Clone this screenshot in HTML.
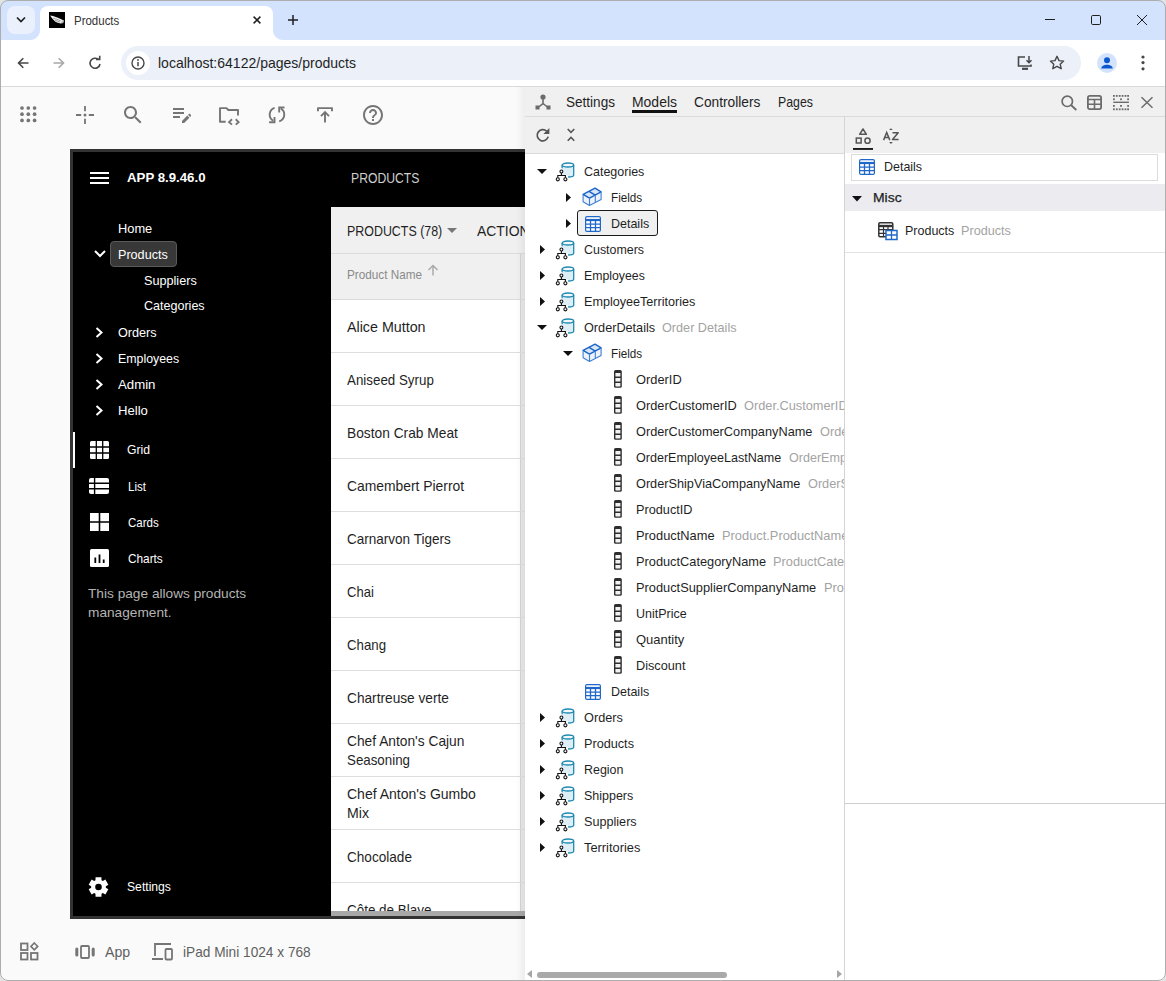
<!DOCTYPE html>
<html><head><meta charset="utf-8">
<style>
*{box-sizing:border-box;margin:0;padding:0}
html,body{width:1166px;height:981px;overflow:hidden;background:#fafafa;font-family:"Liberation Sans",sans-serif;color:#1f1f1f}
#win{position:absolute;left:0;top:0;width:1166px;height:981px;overflow:hidden;background:#fafafa}
.r{position:absolute}
svg{position:absolute;overflow:visible}
.t{position:absolute;white-space:nowrap;line-height:1;transform-origin:0 0}
.clip{position:absolute;left:0;top:0;overflow:hidden}
</style></head><body><div id="win">

<div class="r" style="left:0px;top:0px;width:1166px;height:40px;background:#d3e3fd"></div>
<div class="r" style="left:40px;top:6px;width:233px;height:34px;background:#fff;border-radius:8px 8px 0 0"></div>
<div class="r" style="left:30px;top:30px;width:10px;height:10px;background:radial-gradient(circle at 0 0,#d3e3fd 9.5px,#fff 10.5px)"></div>
<div class="r" style="left:273px;top:30px;width:10px;height:10px;background:radial-gradient(circle at 10px 0,#d3e3fd 9.5px,#fff 10.5px)"></div>
<div class="r" style="left:7px;top:6px;width:28px;height:28px;background:#eaf1fd;border-radius:8px"></div>
<svg style="left:15px;top:16px" width="12" height="8" viewBox="0 0 12 8"><path d="M2 1.5l4 4 4-4" fill="none" stroke="#1f1f1f" stroke-width="1.7"/></svg>
<div class="r" style="left:49px;top:12px;width:16px;height:16px;background:#000"></div>
<svg style="left:49px;top:12px" width="16" height="16" viewBox="0 0 16 16"><path d="M1.1 3.4C4.5 3.8 10 5.6 15.2 8.7L14.2 10.8C12.5 11.8 10 11.5 8 10.6 5.5 9.3 3 6.5 1.1 3.4z" fill="#f2f2f2"/><path d="M4 6.2c2.5.6 5 1.3 7.5 2.6M6 8.3c1.8.5 3.5 1.1 5 1.8" stroke="#777" stroke-width=".7" fill="none"/><path d="M13.8 8.6l.8 2.6M12.8 9.6l.6 2.4" stroke="#555" stroke-width=".6"/></svg>
<div class="t" style="left:73.80px;top:14.98px;font-size:12.30px;color:#333;transform:scaleX(0.9333)">Products</div>
<svg style="left:253px;top:16px" width="8" height="8" viewBox="0 0 8 8"><path d="M0.6 0.6l6.8 6.8M7.4 0.6l-6.8 6.8" stroke="#1f1f1f" stroke-width="1.5"/></svg>
<svg style="left:288px;top:15px" width="10" height="10" viewBox="0 0 10 10"><path d="M5 0v10M0 5h10" stroke="#1f1f1f" stroke-width="1.5"/></svg>
<svg style="left:1045px;top:19px" width="10" height="1" viewBox="0 0 10 1"><path d="M0 .5h10" stroke="#1f1f1f" stroke-width="1"/></svg>
<svg style="left:1091px;top:15px" width="10" height="10" viewBox="0 0 10 10"><rect x=".5" y=".5" width="9" height="9" rx="1.2" fill="none" stroke="#1f1f1f" stroke-width="1"/></svg>
<svg style="left:1137px;top:15px" width="10" height="10" viewBox="0 0 10 10"><path d="M0 0l10 10M10 0L0 10" stroke="#1f1f1f" stroke-width="1"/></svg>
<div class="r" style="left:0px;top:40px;width:1166px;height:46px;background:#fff"></div>
<div class="r" style="left:0px;top:86px;width:1166px;height:1px;background:#d9d9d9"></div>
<svg style="left:17px;top:57px" width="12" height="12" viewBox="0 0 12 12"><path d="M11.5 6H1.8M6.3 1.2L1.5 6l4.8 4.8" fill="none" stroke="#474747" stroke-width="1.6"/></svg>
<svg style="left:53px;top:57px" width="12" height="12" viewBox="0 0 12 12"><path d="M.5 6h9.7M5.7 1.2L10.5 6l-4.8 4.8" fill="none" stroke="#a8a8a8" stroke-width="1.6"/></svg>
<svg style="left:89px;top:57px" width="12" height="12" viewBox="0 0 12 12"><path d="M11 7A5 5 0 1 1 9.3 2.4" fill="none" stroke="#474747" stroke-width="1.6"/><path d="M7 2.4h3.7V-1.2" fill="none" stroke="#474747" stroke-width="1.6"/></svg>
<div class="r" style="left:121px;top:46px;width:960px;height:34px;background:#ebf0f9;border-radius:17px"></div>
<div class="r" style="left:126px;top:51px;width:24px;height:24px;background:#fff;border-radius:12px"></div>
<svg style="left:131px;top:56px" width="14" height="14" viewBox="0 0 14 14"><circle cx="7" cy="7" r="6" fill="none" stroke="#474747" stroke-width="1.4"/><path d="M7 6v4.2" stroke="#474747" stroke-width="1.5"/><circle cx="7" cy="4" r=".9" fill="#474747"/></svg>
<div class="t" style="left:158.40px;top:56.27px;font-size:14.20px;color:#1f1f1f;transform:scaleX(0.9884)">localhost:64122/pages/products</div>
<svg style="left:1017px;top:56px" width="17" height="14" viewBox="0 0 17 14"><path d="M8 1H1.5v9H14V8.5" fill="none" stroke="#474747" stroke-width="1.6"/><path d="M12 0v6.5M9.5 4.2L12 6.7l2.5-2.5" fill="none" stroke="#474747" stroke-width="1.5"/><path d="M5 12.8h6" stroke="#474747" stroke-width="2.2"/></svg>
<svg style="left:1049px;top:55px" width="16" height="15" viewBox="0 0 16 15"><path d="M8 1.3l2 4.3 4.6.5-3.4 3.1 1 4.5L8 11.4 3.8 13.7l1-4.5L1.4 6.1 6 5.6z" fill="none" stroke="#474747" stroke-width="1.4" stroke-linejoin="round"/></svg>
<div class="r" style="left:1097px;top:53px;width:20px;height:20px;background:#d3e3fd;border-radius:10px"></div>
<svg style="left:1097px;top:53px" width="20" height="20" viewBox="0 0 20 20"><circle cx="10" cy="7.3" r="3" fill="#0b57d0"/><path d="M4.3 15.5c0-2.6 2.9-3.8 5.7-3.8s5.7 1.2 5.7 3.8z" fill="#0b57d0"/></svg>
<svg style="left:1141px;top:55px" width="4" height="16" viewBox="0 0 4 16"><circle cx="2" cy="2" r="1.6" fill="#474747"/><circle cx="2" cy="7.6" r="1.6" fill="#474747"/><circle cx="2" cy="13.8" r="1.6" fill="#474747"/></svg>
<svg style="left:20px;top:106px" width="17" height="17" viewBox="0 0 17 17"><circle cx="2.0" cy="2.0" r="1.85" fill="#757575"/><circle cx="2.0" cy="8.2" r="1.85" fill="#757575"/><circle cx="2.0" cy="14.4" r="1.85" fill="#757575"/><circle cx="8.3" cy="2.0" r="1.85" fill="#757575"/><circle cx="8.3" cy="8.2" r="1.85" fill="#757575"/><circle cx="8.3" cy="14.4" r="1.85" fill="#757575"/><circle cx="14.6" cy="2.0" r="1.85" fill="#757575"/><circle cx="14.6" cy="8.2" r="1.85" fill="#757575"/><circle cx="14.6" cy="14.4" r="1.85" fill="#757575"/></svg>
<svg style="left:76px;top:106px" width="18" height="18" viewBox="0 0 18 18"><path d="M9 0v5.2M9 12.8V18M0 9h5.2M12.8 9H18" stroke="#757575" stroke-width="1.8"/><circle cx="9" cy="9" r="1.5" fill="#757575"/></svg>
<svg style="left:121px;top:103px" width="24" height="24" viewBox="0 0 24 24"><path fill="#757575" d="M15.5 14h-.79l-.28-.27C15.41 12.59 16 11.11 16 9.5 16 5.91 13.09 3 9.5 3S3 5.91 3 9.5 5.91 16 9.5 16c1.61 0 3.09-.59 4.23-1.57l.27.28v.79l5 4.99L20.49 19l-4.99-5zm-6 0C7.01 14 5 11.99 5 9.5S7.01 5 9.5 5 14 7.01 14 9.5 11.99 14 9.5 14z"/></svg>
<svg style="left:170px;top:101.5px" width="24" height="24" viewBox="0 0 24 24"><path fill="#757575" d="M3 10h11v2H3v-2zm0-2h11V6H3v2zm0 8h7v-2H3v2zm15.01-3.13.71-.71c.39-.39 1.02-.39 1.41 0l.71.71c.39.39.39 1.02 0 1.41l-.71.71-2.12-2.12zm-.71.71-5.3 5.3V21h2.12l5.3-5.3-2.12-2.12z"/></svg>
<svg style="left:218px;top:106px" width="24" height="20" viewBox="0 0 24 20"><path d="M7.7 15.7H2V2.1h6.5l1.8 1.9H20v5.5" fill="none" stroke="#757575" stroke-width="1.9" stroke-linejoin="round"/><path d="M14 13.3l-2.9 2.8 2.9 2.5M17.7 13.3l2.9 2.8-2.9 2.5" fill="none" stroke="#757575" stroke-width="1.9"/></svg>
<svg style="left:268px;top:106px" width="18" height="18" viewBox="0 0 18 18"><path d="M6.6 1.9A7.1 7.1 0 0 0 5.2 14.8" fill="none" stroke="#757575" stroke-width="1.9"/><path d="M1.1 16.3H6.5V10.9" fill="none" stroke="#757575" stroke-width="1.9"/><path d="M11.2 15.4A7.1 7.1 0 0 0 12.8 2.5" fill="none" stroke="#757575" stroke-width="1.9"/><path d="M11.2 6.5V1.5H16.5" fill="none" stroke="#757575" stroke-width="1.9"/></svg>
<svg style="left:317px;top:106px" width="16" height="18" viewBox="0 0 16 18"><path d="M1 5.3V2.1h14v3.2" fill="none" stroke="#757575" stroke-width="1.9" stroke-linejoin="round"/><path d="M8 16.5V6.3M4 10.1l4-4 4 4" fill="none" stroke="#757575" stroke-width="1.9"/></svg>
<svg style="left:361px;top:103px" width="24" height="24" viewBox="0 0 24 24"><path fill="#757575" d="M11 18h2v-2h-2v2zm1-16C6.48 2 2 6.48 2 12s4.48 10 10 10 10-4.48 10-10S17.52 2 12 2zm0 18c-4.41 0-8-3.59-8-8s3.59-8 8-8 8 3.59 8 8-3.59 8-8 8zm0-14c-2.21 0-4 1.79-4 4h2c0-1.1.9-2 2-2s2 .9 2 2c0 2-3 1.75-3 5h2c0-2.25 3-2.5 3-5 0-2.21-1.79-4-4-4z"/></svg>
<div class="clip" style="width:525px;height:981px">
<div class="r" style="left:70px;top:149px;width:470px;height:770px;background:#333"></div>
<div class="r" style="left:73px;top:152px;width:470px;height:764px;background:#000"></div>
<div class="r" style="left:89.5px;top:172px;width:19px;height:2px;background:#fff"></div>
<div class="r" style="left:89.5px;top:177px;width:19px;height:2px;background:#fff"></div>
<div class="r" style="left:89.5px;top:182px;width:19px;height:2px;background:#fff"></div>
<div class="t" style="left:127.30px;top:171.32px;font-size:13.20px;color:#fff;font-weight:700;transform:scaleX(1.0041)">APP 8.9.46.0</div>
<div class="t" style="left:350.50px;top:170.87px;font-size:14.20px;color:#cfcfcf;transform:scaleX(0.8597)">PRODUCTS</div>
<div class="t" style="left:118.30px;top:221.72px;font-size:13.20px;color:#fff;transform:scaleX(0.9741)">Home</div>
<div class="r" style="left:109.5px;top:241px;width:67px;height:26px;background:#383838;border:1px solid #5a5a5a;border-radius:4px"></div>
<svg style="left:94px;top:250px" width="12" height="8" viewBox="0 0 12 8"><path d="M1 1l5 5 5-5" fill="none" stroke="#fff" stroke-width="2"/></svg>
<div class="t" style="left:118.30px;top:247.82px;font-size:13.20px;color:#fff;transform:scaleX(0.9560)">Products</div>
<div class="t" style="left:144.10px;top:273.62px;font-size:13.20px;color:#fff;transform:scaleX(0.9595)">Suppliers</div>
<div class="t" style="left:144.10px;top:299.42px;font-size:13.20px;color:#fff;transform:scaleX(0.9509)">Categories</div>
<svg style="left:95px;top:327.3px" width="9" height="11" viewBox="0 0 9 11"><path d="M1.5 1l5 4.5-5 4.5" fill="none" stroke="#fff" stroke-width="2"/></svg>
<div class="t" style="left:118.10px;top:325.62px;font-size:13.20px;color:#fff;transform:scaleX(0.9593)">Orders</div>
<svg style="left:95px;top:353.3px" width="9" height="11" viewBox="0 0 9 11"><path d="M1.5 1l5 4.5-5 4.5" fill="none" stroke="#fff" stroke-width="2"/></svg>
<div class="t" style="left:118.10px;top:351.62px;font-size:13.20px;color:#fff;transform:scaleX(0.9372)">Employees</div>
<svg style="left:95px;top:379.3px" width="9" height="11" viewBox="0 0 9 11"><path d="M1.5 1l5 4.5-5 4.5" fill="none" stroke="#fff" stroke-width="2"/></svg>
<div class="t" style="left:118.10px;top:377.62px;font-size:13.20px;color:#fff;transform:scaleX(1.0023)">Admin</div>
<svg style="left:95px;top:405.3px" width="9" height="11" viewBox="0 0 9 11"><path d="M1.5 1l5 4.5-5 4.5" fill="none" stroke="#fff" stroke-width="2"/></svg>
<div class="t" style="left:118.10px;top:403.62px;font-size:13.20px;color:#fff;transform:scaleX(0.9940)">Hello</div>
<div class="r" style="left:73px;top:432px;width:2px;height:36px;background:#fff"></div>
<svg style="left:89.5px;top:441px" width="19" height="18" viewBox="0 0 19 18"><rect x="0" y="0" width="19" height="18" rx="1.5" fill="#fff"/><path d="M6.3 0v18M12.7 0v18M0 6h19M0 12h19" stroke="#000" stroke-width="1.3"/></svg>
<div class="t" style="left:127.10px;top:443.42px;font-size:13.20px;color:#fff;transform:scaleX(0.9263)">Grid</div>
<svg style="left:89px;top:478px" width="20" height="16" viewBox="0 0 20 16"><rect x="0" y="0" width="20" height="16" rx="2" fill="#fff"/><path d="M5.6 0v16M0 5.3h20M0 10.7h20" stroke="#000" stroke-width="1.4"/></svg>
<div class="t" style="left:127.50px;top:479.72px;font-size:13.20px;color:#fff;transform:scaleX(0.8763)">List</div>
<svg style="left:89.7px;top:513px" width="19" height="18" viewBox="0 0 19 18"><rect x="0" y="0" width="19" height="18" fill="#fff"/><path d="M9.5 0v18M0 9h19" stroke="#000" stroke-width="1.6"/></svg>
<div class="t" style="left:127.50px;top:515.72px;font-size:13.20px;color:#fff;transform:scaleX(0.8719)">Cards</div>
<svg style="left:89.7px;top:549px" width="19" height="18" viewBox="0 0 19 18"><rect x="0" y="0" width="19" height="18" rx="1.5" fill="#fff"/><path d="M5.3 8.5v5.5M9.5 5.5v8.5M13.7 10.5v3.5" stroke="#000" stroke-width="1.8"/></svg>
<div class="t" style="left:127.50px;top:551.72px;font-size:13.20px;color:#fff;transform:scaleX(0.8951)">Charts</div>
<div class="t" style="left:88.00px;top:587.22px;font-size:13.20px;color:#b4b4b4;transform:scaleX(1.0373)">This page allows products</div>
<div class="t" style="left:88.00px;top:606.02px;font-size:13.20px;color:#b4b4b4;transform:scaleX(1.0370)">management.</div>
<svg style="left:88.1px;top:877px" width="21" height="20" viewBox="0 0 21 20"><path fill="#fff" fill-rule="evenodd" d="M13.45 0.34 L7.55 0.34 L7.49 3.24 L6.15 4.01 L3.61 2.61 L0.66 7.73 L3.14 9.23 L3.14 10.77 L0.66 12.27 L3.61 17.39 L6.15 15.99 L7.49 16.76 L7.55 19.66 L13.45 19.66 L13.51 16.76 L14.85 15.99 L17.39 17.39 L20.34 12.27 L17.86 10.77 L17.86 9.23 L20.34 7.73 L17.39 2.61 L14.85 4.01 L13.51 3.24z M13.80 10.00 A3.3 3.3 0 1 0 7.20 10.00 A3.3 3.3 0 1 0 13.80 10.00z"/></svg>
<div class="t" style="left:127.30px;top:880.22px;font-size:13.20px;color:#fff;transform:scaleX(0.9225)">Settings</div>
<div class="r" style="left:331px;top:207px;width:200px;height:709px;background:#fff"></div>
<div class="r" style="left:331px;top:207px;width:200px;height:92px;background:#f0f0f0"></div>
<div class="r" style="left:521px;top:253px;width:4px;height:658px;background:#e9e9e9"></div>
<div class="r" style="left:520px;top:253px;width:1px;height:658px;background:#d4d4d4"></div>
<div class="r" style="left:331px;top:253px;width:200px;height:1px;background:#dcdcdc"></div>
<div class="r" style="left:331px;top:299px;width:200px;height:1px;background:#dcdcdc"></div>
<div class="t" style="left:346.90px;top:223.97px;font-size:14.20px;color:#1f1f1f;transform:scaleX(0.8753)">PRODUCTS (78)</div>
<svg style="left:447px;top:228px" width="10" height="5" viewBox="0 0 10 5"><path d="M0 0h10L5 5z" fill="#777"/></svg>
<div class="t" style="left:477.00px;top:223.97px;font-size:14.20px;color:#1f1f1f;transform:scaleX(0.9823)">ACTIONS</div>
<div class="t" style="left:346.90px;top:267.52px;font-size:13.20px;color:#8a8a8a;transform:scaleX(0.8901)">Product Name</div>
<svg style="left:427px;top:264px" width="12" height="12" viewBox="0 0 12 12"><path d="M6 11.5V1.5M1.5 6L6 1.5 10.5 6" fill="none" stroke="#aaa" stroke-width="1.5"/></svg>
<div class="t" style="left:346.90px;top:319.77px;font-size:14.20px;color:#1f1f1f;transform:scaleX(1.0060)">Alice Mutton</div>
<div class="r" style="left:331px;top:352px;width:194px;height:1px;background:#dedede"></div>
<div class="t" style="left:346.90px;top:372.77px;font-size:14.20px;color:#1f1f1f;transform:scaleX(0.9409)">Aniseed Syrup</div>
<div class="r" style="left:331px;top:405px;width:194px;height:1px;background:#dedede"></div>
<div class="t" style="left:346.90px;top:425.77px;font-size:14.20px;color:#1f1f1f;transform:scaleX(0.9699)">Boston Crab Meat</div>
<div class="r" style="left:331px;top:458px;width:194px;height:1px;background:#dedede"></div>
<div class="t" style="left:346.90px;top:478.77px;font-size:14.20px;color:#1f1f1f;transform:scaleX(0.9771)">Camembert Pierrot</div>
<div class="r" style="left:331px;top:511px;width:194px;height:1px;background:#dedede"></div>
<div class="t" style="left:346.90px;top:531.77px;font-size:14.20px;color:#1f1f1f;transform:scaleX(0.9530)">Carnarvon Tigers</div>
<div class="r" style="left:331px;top:564px;width:194px;height:1px;background:#dedede"></div>
<div class="t" style="left:346.90px;top:584.77px;font-size:14.20px;color:#1f1f1f;transform:scaleX(0.9177)">Chai</div>
<div class="r" style="left:331px;top:617px;width:194px;height:1px;background:#dedede"></div>
<div class="t" style="left:346.90px;top:637.77px;font-size:14.20px;color:#1f1f1f;transform:scaleX(0.9344)">Chang</div>
<div class="r" style="left:331px;top:670px;width:194px;height:1px;background:#dedede"></div>
<div class="t" style="left:346.90px;top:690.77px;font-size:14.20px;color:#1f1f1f;transform:scaleX(0.9645)">Chartreuse verte</div>
<div class="r" style="left:331px;top:723px;width:194px;height:1px;background:#dedede"></div>
<div class="r" style="left:331px;top:776px;width:194px;height:1px;background:#dedede"></div>
<div class="r" style="left:331px;top:829px;width:194px;height:1px;background:#dedede"></div>
<div class="t" style="left:346.90px;top:849.77px;font-size:14.20px;color:#1f1f1f;transform:scaleX(0.9574)">Chocolade</div>
<div class="r" style="left:331px;top:882px;width:194px;height:1px;background:#dedede"></div>
<div class="t" style="left:346.90px;top:902.77px;font-size:14.20px;color:#1f1f1f;transform:scaleX(0.9473)">Côte de Blaye</div>
<div class="t" style="left:346.90px;top:733.77px;font-size:14.20px;color:#1f1f1f;transform:scaleX(0.9701)">Chef Anton&#x27;s Cajun</div>
<div class="t" style="left:346.90px;top:752.97px;font-size:14.20px;color:#1f1f1f;transform:scaleX(0.9387)">Seasoning</div>
<div class="t" style="left:346.90px;top:786.77px;font-size:14.20px;color:#1f1f1f;transform:scaleX(0.9878)">Chef Anton&#x27;s Gumbo</div>
<div class="t" style="left:346.90px;top:805.97px;font-size:14.20px;color:#1f1f1f;transform:scaleX(0.9962)">Mix</div>
<div class="r" style="left:331px;top:911px;width:200px;height:5px;background:#a8a8a8"></div>
<div class="r" style="left:70px;top:916px;width:470px;height:3px;background:#333"></div>
</div>
<svg style="left:20px;top:942px" width="19" height="19" viewBox="0 0 19 19"><rect x="1" y="1.5" width="6.5" height="6.5" fill="none" stroke="#757575" stroke-width="1.8"/><rect x="1" y="11" width="6.5" height="6.5" fill="none" stroke="#757575" stroke-width="1.8"/><rect x="11" y="11" width="6.5" height="6.5" fill="none" stroke="#757575" stroke-width="1.8"/><path d="M14.3 1l3.4 3.4-3.4 3.4-3.4-3.4z" fill="none" stroke="#757575" stroke-width="1.6"/></svg>
<svg style="left:75px;top:945px" width="20" height="14" viewBox="0 0 20 14"><rect x="6" y="1" width="8" height="12" rx="1" fill="none" stroke="#757575" stroke-width="1.8"/><rect x="0.3" y="2.5" width="3" height="9" rx="1.5" fill="#757575"/><rect x="16.7" y="2.5" width="3" height="9" rx="1.5" fill="#757575"/></svg>
<div class="t" style="left:105.30px;top:944.67px;font-size:14.20px;color:#5f5f5f;transform:scaleX(0.9974)">App</div>
<svg style="left:152px;top:943px" width="21" height="18" viewBox="0 0 21 18"><path d="M3 13V1h16" fill="none" stroke="#757575" stroke-width="1.8"/><path d="M0 16h11" stroke="#757575" stroke-width="2"/><rect x="13.5" y="6" width="6.5" height="10.5" rx="1" fill="none" stroke="#757575" stroke-width="1.8"/></svg>
<div class="t" style="left:182.70px;top:944.67px;font-size:14.20px;color:#5f5f5f;transform:scaleX(0.9637)">iPad Mini 1024 x 768</div>
<div class="r" style="left:516px;top:87px;width:9px;height:894px;background:linear-gradient(to right,rgba(0,0,0,0),rgba(0,0,0,.05))"></div>
<div class="r" style="left:525px;top:87px;width:641px;height:894px;background:#fff"></div>
<div class="r" style="left:525px;top:87px;width:641px;height:29px;background:#f0f0f0"></div>
<div class="r" style="left:525px;top:116px;width:641px;height:1px;background:#dadada"></div>
<div class="r" style="left:525px;top:117px;width:641px;height:36px;background:#f0f0f0"></div>
<div class="r" style="left:525px;top:153px;width:320px;height:1px;background:#dadada"></div>
<div class="r" style="left:844px;top:117px;width:1px;height:864px;background:#d4d4d4"></div>
<svg style="left:535px;top:94px" width="16" height="16" viewBox="0 0 16 16"><circle cx="8" cy="3" r="2.6" fill="#6b6b6b"/><path d="M8 5v4.5L3 13.5M8 9.5l5 4" fill="none" stroke="#6b6b6b" stroke-width="1.6"/><rect x="0.5" y="11.5" width="4" height="4" fill="#6b6b6b"/><rect x="11.5" y="11.5" width="4" height="4" fill="#6b6b6b"/></svg>
<div class="t" style="left:566.30px;top:94.97px;font-size:14.20px;color:#1f1f1f;transform:scaleX(0.9550)">Settings</div>
<div class="t" style="left:632.40px;top:94.97px;font-size:14.20px;color:#1f1f1f;transform:scaleX(0.9830)">Models</div>
<div class="r" style="left:632px;top:110px;width:45px;height:2.5px;background:#111"></div>
<div class="t" style="left:693.90px;top:94.97px;font-size:14.20px;color:#1f1f1f;transform:scaleX(0.9686)">Controllers</div>
<div class="t" style="left:777.50px;top:94.97px;font-size:14.20px;color:#1f1f1f;transform:scaleX(0.8693)">Pages</div>
<svg style="left:1061px;top:94.5px" width="16" height="15" viewBox="0 0 16 15"><circle cx="6.3" cy="6.3" r="5.2" fill="none" stroke="#6b6b6b" stroke-width="1.7"/><path d="M10 10l5.3 5" stroke="#6b6b6b" stroke-width="1.8"/></svg>
<svg style="left:1087px;top:94.5px" width="15" height="15" viewBox="0 0 15 15"><rect x=".9" y=".9" width="13.2" height="13.2" rx="1.8" fill="none" stroke="#6b6b6b" stroke-width="1.8"/><path d="M.9 4.5h13.2M.9 9.3h13.2M7.5 4.5v9.6" stroke="#6b6b6b" stroke-width="1.6"/></svg>
<svg style="left:1113px;top:94.5px" width="16" height="16" viewBox="0 0 16 16"><rect x="0.0" y="0.0" width="1.8" height="1.8" fill="#6b6b6b"/><rect x="2.9" y="0.0" width="1.8" height="1.8" fill="#6b6b6b"/><rect x="5.8" y="0.0" width="1.8" height="1.8" fill="#6b6b6b"/><rect x="8.7" y="0.0" width="1.8" height="1.8" fill="#6b6b6b"/><rect x="11.6" y="0.0" width="1.8" height="1.8" fill="#6b6b6b"/><rect x="14.2" y="0.0" width="1.8" height="1.8" fill="#6b6b6b"/><rect x="0.0" y="13.4" width="1.8" height="1.8" fill="#6b6b6b"/><rect x="2.9" y="13.4" width="1.8" height="1.8" fill="#6b6b6b"/><rect x="5.8" y="13.4" width="1.8" height="1.8" fill="#6b6b6b"/><rect x="8.7" y="13.4" width="1.8" height="1.8" fill="#6b6b6b"/><rect x="11.6" y="13.4" width="1.8" height="1.8" fill="#6b6b6b"/><rect x="14.2" y="13.4" width="1.8" height="1.8" fill="#6b6b6b"/><rect x="0.0" y="3.4" width="1.8" height="1.8" fill="#6b6b6b"/><rect x="7.1" y="3.4" width="1.8" height="1.8" fill="#6b6b6b"/><rect x="14.2" y="3.4" width="1.8" height="1.8" fill="#6b6b6b"/><rect x="0.0" y="10.0" width="1.8" height="1.8" fill="#6b6b6b"/><rect x="7.1" y="10.0" width="1.8" height="1.8" fill="#6b6b6b"/><rect x="14.2" y="10.0" width="1.8" height="1.8" fill="#6b6b6b"/><path d="M0.3 7.3h15.6" stroke="#6b6b6b" stroke-width="1.4"/></svg>
<svg style="left:1141px;top:96.5px" width="12" height="11" viewBox="0 0 12 11"><path d="M.5 .3l11 10.4M11.5 .3L.5 10.7" stroke="#6b6b6b" stroke-width="1.5"/></svg>
<svg style="left:536px;top:128px" width="14" height="14" viewBox="0 0 14 14"><path d="M12.2 8.6A5.6 5.6 0 1 1 10.6 3.2" fill="none" stroke="#555" stroke-width="1.7"/><path d="M13.4 0v6H7.4z" fill="#555"/></svg>
<svg style="left:567px;top:128px" width="8" height="14" viewBox="0 0 8 14"><path d="M.7 1l3.3 3.3L7.3 1M.7 12.7L4 9.4l3.3 3.3" fill="none" stroke="#555" stroke-width="1.6"/></svg>
<div class="clip" style="width:844px;height:981px">
<svg style="left:537.2px;top:169px" width="10" height="5" viewBox="0 0 10 5"><path d="M0 0h10L5 5z" fill="#111"/></svg>
<svg style="left:555px;top:162px" width="20" height="20" viewBox="0 0 20 20"><path d="M7.1 3V13.5H13v1.5c3.4 0 5.7-.8 5.7-1.8V3z" fill="#deeef6"/><path d="M7.1 3V6.2M18.7 3v10.2c0 1-2.2 1.8-5.6 1.8" fill="none" stroke="#2089b0" stroke-width="1.3"/><ellipse cx="12.9" cy="3" rx="5.8" ry="2" fill="#f2f9fc" stroke="#2089b0" stroke-width="1.3"/><circle cx="6.4" cy="9.5" r="1.45" fill="#fff" stroke="#111" stroke-width="1.1"/><path d="M6.4 11v2.5M2.8 15.7v-2.2h7.6v2.2" fill="none" stroke="#111" stroke-width="1.1"/><circle cx="2.8" cy="17.3" r="1.55" fill="#fff" stroke="#111" stroke-width="1.1"/><circle cx="10.4" cy="17.3" r="1.55" fill="#fff" stroke="#111" stroke-width="1.1"/></svg>
<div class="t" style="left:584.30px;top:164.82px;font-size:13.20px;color:#1f1f1f;transform:scaleX(0.9462)">Categories</div>
<svg style="left:566px;top:192.5px" width="5" height="9" viewBox="0 0 5 9"><path d="M0 0l5 4.5L0 9z" fill="#111"/></svg>
<svg style="left:583px;top:188.2px" width="18" height="18" viewBox="0 0 18 18"><path d="M0.1 6.4L12 0.2l6.1 3.7v7.6L6.5 17.5 0.1 13.8z" fill="#eef3fb"/><path d="M0.1 6.4L12 0.2l6.1 3.7L6.5 10.1z" fill="#d9e6f8"/><path d="M0.1 6.4L12 0.2l6.1 3.7L6.5 10.1zM6 3.3l6.3 3.8" fill="none" stroke="#1a64c8" stroke-width="1.4" stroke-linejoin="round"/><path d="M0.1 6.4v7.4l6.4 3.7 11.6-6V3.9M6.5 10.1v7.4M12.3 7.1v7.3" fill="none" stroke="#3f7fd6" stroke-width="1.1" stroke-linejoin="round"/></svg>
<div class="t" style="left:610.50px;top:190.82px;font-size:13.20px;color:#1f1f1f;transform:scaleX(0.8861)">Fields</div>
<div class="r" style="left:577.2px;top:210px;width:80.5px;height:25.5px;background:#f0f0f0;border:1px solid #1a1a1a;border-radius:3px"></div>
<svg style="left:566px;top:218.5px" width="5" height="9" viewBox="0 0 5 9"><path d="M0 0l5 4.5L0 9z" fill="#111"/></svg>
<svg style="left:584.6px;top:216px" width="16" height="16" viewBox="0 0 16 16"><rect x=".6" y=".6" width="14.8" height="14.8" rx="1.4" fill="#fff" stroke="#1f68c9" stroke-width="1.2"/><path d="M.6 4h14.8" stroke="#1f68c9" stroke-width="2.2"/><path d="M.6 8.2h14.8M.6 11.7h14.8M5.5 4v11.4M10.5 4v11.4" stroke="#1f68c9" stroke-width="1.3"/></svg>
<div class="t" style="left:610.50px;top:216.82px;font-size:13.20px;color:#1f1f1f;transform:scaleX(0.9468)">Details</div>
<svg style="left:540px;top:244.5px" width="5" height="9" viewBox="0 0 5 9"><path d="M0 0l5 4.5L0 9z" fill="#111"/></svg>
<svg style="left:555px;top:240px" width="20" height="20" viewBox="0 0 20 20"><path d="M7.1 3V13.5H13v1.5c3.4 0 5.7-.8 5.7-1.8V3z" fill="#deeef6"/><path d="M7.1 3V6.2M18.7 3v10.2c0 1-2.2 1.8-5.6 1.8" fill="none" stroke="#2089b0" stroke-width="1.3"/><ellipse cx="12.9" cy="3" rx="5.8" ry="2" fill="#f2f9fc" stroke="#2089b0" stroke-width="1.3"/><circle cx="6.4" cy="9.5" r="1.45" fill="#fff" stroke="#111" stroke-width="1.1"/><path d="M6.4 11v2.5M2.8 15.7v-2.2h7.6v2.2" fill="none" stroke="#111" stroke-width="1.1"/><circle cx="2.8" cy="17.3" r="1.55" fill="#fff" stroke="#111" stroke-width="1.1"/><circle cx="10.4" cy="17.3" r="1.55" fill="#fff" stroke="#111" stroke-width="1.1"/></svg>
<div class="t" style="left:584.30px;top:242.82px;font-size:13.20px;color:#1f1f1f;transform:scaleX(0.9418)">Customers</div>
<svg style="left:540px;top:270.5px" width="5" height="9" viewBox="0 0 5 9"><path d="M0 0l5 4.5L0 9z" fill="#111"/></svg>
<svg style="left:555px;top:266px" width="20" height="20" viewBox="0 0 20 20"><path d="M7.1 3V13.5H13v1.5c3.4 0 5.7-.8 5.7-1.8V3z" fill="#deeef6"/><path d="M7.1 3V6.2M18.7 3v10.2c0 1-2.2 1.8-5.6 1.8" fill="none" stroke="#2089b0" stroke-width="1.3"/><ellipse cx="12.9" cy="3" rx="5.8" ry="2" fill="#f2f9fc" stroke="#2089b0" stroke-width="1.3"/><circle cx="6.4" cy="9.5" r="1.45" fill="#fff" stroke="#111" stroke-width="1.1"/><path d="M6.4 11v2.5M2.8 15.7v-2.2h7.6v2.2" fill="none" stroke="#111" stroke-width="1.1"/><circle cx="2.8" cy="17.3" r="1.55" fill="#fff" stroke="#111" stroke-width="1.1"/><circle cx="10.4" cy="17.3" r="1.55" fill="#fff" stroke="#111" stroke-width="1.1"/></svg>
<div class="t" style="left:584.30px;top:268.82px;font-size:13.20px;color:#1f1f1f;transform:scaleX(0.9326)">Employees</div>
<svg style="left:540px;top:296.5px" width="5" height="9" viewBox="0 0 5 9"><path d="M0 0l5 4.5L0 9z" fill="#111"/></svg>
<svg style="left:555px;top:292px" width="20" height="20" viewBox="0 0 20 20"><path d="M7.1 3V13.5H13v1.5c3.4 0 5.7-.8 5.7-1.8V3z" fill="#deeef6"/><path d="M7.1 3V6.2M18.7 3v10.2c0 1-2.2 1.8-5.6 1.8" fill="none" stroke="#2089b0" stroke-width="1.3"/><ellipse cx="12.9" cy="3" rx="5.8" ry="2" fill="#f2f9fc" stroke="#2089b0" stroke-width="1.3"/><circle cx="6.4" cy="9.5" r="1.45" fill="#fff" stroke="#111" stroke-width="1.1"/><path d="M6.4 11v2.5M2.8 15.7v-2.2h7.6v2.2" fill="none" stroke="#111" stroke-width="1.1"/><circle cx="2.8" cy="17.3" r="1.55" fill="#fff" stroke="#111" stroke-width="1.1"/><circle cx="10.4" cy="17.3" r="1.55" fill="#fff" stroke="#111" stroke-width="1.1"/></svg>
<div class="t" style="left:584.30px;top:294.82px;font-size:13.20px;color:#1f1f1f;transform:scaleX(0.9559)">EmployeeTerritories</div>
<svg style="left:537.2px;top:325px" width="10" height="5" viewBox="0 0 10 5"><path d="M0 0h10L5 5z" fill="#111"/></svg>
<svg style="left:555px;top:318px" width="20" height="20" viewBox="0 0 20 20"><path d="M7.1 3V13.5H13v1.5c3.4 0 5.7-.8 5.7-1.8V3z" fill="#deeef6"/><path d="M7.1 3V6.2M18.7 3v10.2c0 1-2.2 1.8-5.6 1.8" fill="none" stroke="#2089b0" stroke-width="1.3"/><ellipse cx="12.9" cy="3" rx="5.8" ry="2" fill="#f2f9fc" stroke="#2089b0" stroke-width="1.3"/><circle cx="6.4" cy="9.5" r="1.45" fill="#fff" stroke="#111" stroke-width="1.1"/><path d="M6.4 11v2.5M2.8 15.7v-2.2h7.6v2.2" fill="none" stroke="#111" stroke-width="1.1"/><circle cx="2.8" cy="17.3" r="1.55" fill="#fff" stroke="#111" stroke-width="1.1"/><circle cx="10.4" cy="17.3" r="1.55" fill="#fff" stroke="#111" stroke-width="1.1"/></svg>
<div class="t" style="left:584.30px;top:320.82px;font-size:13.20px;color:#1f1f1f;transform:scaleX(0.9610)">OrderDetails</div>
<div class="t" style="left:662.30px;top:320.82px;font-size:13.20px;color:#a3a3a3;transform:scaleX(0.9594)">Order Details</div>
<svg style="left:563.2px;top:351px" width="10" height="5" viewBox="0 0 10 5"><path d="M0 0h10L5 5z" fill="#111"/></svg>
<svg style="left:583px;top:344.2px" width="18" height="18" viewBox="0 0 18 18"><path d="M0.1 6.4L12 0.2l6.1 3.7v7.6L6.5 17.5 0.1 13.8z" fill="#eef3fb"/><path d="M0.1 6.4L12 0.2l6.1 3.7L6.5 10.1z" fill="#d9e6f8"/><path d="M0.1 6.4L12 0.2l6.1 3.7L6.5 10.1zM6 3.3l6.3 3.8" fill="none" stroke="#1a64c8" stroke-width="1.4" stroke-linejoin="round"/><path d="M0.1 6.4v7.4l6.4 3.7 11.6-6V3.9M6.5 10.1v7.4M12.3 7.1v7.3" fill="none" stroke="#3f7fd6" stroke-width="1.1" stroke-linejoin="round"/></svg>
<div class="t" style="left:610.50px;top:346.82px;font-size:13.20px;color:#1f1f1f;transform:scaleX(0.8861)">Fields</div>
<svg style="left:614.1px;top:370px" width="8" height="18" viewBox="0 0 8 18"><rect x="0" y="0" width="7.8" height="17.8" rx="1.6" fill="#2e2e2e"/><rect x="1.4" y="3" width="5" height="3.6" rx=".4" fill="#f2f2f2"/><rect x="1.4" y="8.1" width="5" height="3.5" rx=".4" fill="#f2f2f2"/><rect x="1.4" y="13" width="5" height="3.5" rx=".4" fill="#f2f2f2"/></svg>
<div class="t" style="left:636.40px;top:372.82px;font-size:13.20px;color:#1f1f1f;transform:scaleX(0.9736)">OrderID</div>
<svg style="left:614.1px;top:396px" width="8" height="18" viewBox="0 0 8 18"><rect x="0" y="0" width="7.8" height="17.8" rx="1.6" fill="#2e2e2e"/><rect x="1.4" y="3" width="5" height="3.6" rx=".4" fill="#f2f2f2"/><rect x="1.4" y="8.1" width="5" height="3.5" rx=".4" fill="#f2f2f2"/><rect x="1.4" y="13" width="5" height="3.5" rx=".4" fill="#f2f2f2"/></svg>
<div class="t" style="left:636.40px;top:398.82px;font-size:13.20px;color:#1f1f1f;transform:scaleX(0.9687)">OrderCustomerID</div>
<div class="t" style="left:744.10px;top:398.82px;font-size:13.20px;color:#a3a3a3;transform:scaleX(0.9687)">Order.CustomerID</div>
<svg style="left:614.1px;top:422px" width="8" height="18" viewBox="0 0 8 18"><rect x="0" y="0" width="7.8" height="17.8" rx="1.6" fill="#2e2e2e"/><rect x="1.4" y="3" width="5" height="3.6" rx=".4" fill="#f2f2f2"/><rect x="1.4" y="8.1" width="5" height="3.5" rx=".4" fill="#f2f2f2"/><rect x="1.4" y="13" width="5" height="3.5" rx=".4" fill="#f2f2f2"/></svg>
<div class="t" style="left:636.40px;top:424.82px;font-size:13.20px;color:#1f1f1f;transform:scaleX(0.9668)">OrderCustomerCompanyName</div>
<div class="t" style="left:819.80px;top:424.82px;font-size:13.20px;color:#a3a3a3;transform:scaleX(0.9668)">Order.CustomerCompanyName</div>
<svg style="left:614.1px;top:448px" width="8" height="18" viewBox="0 0 8 18"><rect x="0" y="0" width="7.8" height="17.8" rx="1.6" fill="#2e2e2e"/><rect x="1.4" y="3" width="5" height="3.6" rx=".4" fill="#f2f2f2"/><rect x="1.4" y="8.1" width="5" height="3.5" rx=".4" fill="#f2f2f2"/><rect x="1.4" y="13" width="5" height="3.5" rx=".4" fill="#f2f2f2"/></svg>
<div class="t" style="left:636.40px;top:450.82px;font-size:13.20px;color:#1f1f1f;transform:scaleX(0.9522)">OrderEmployeeLastName</div>
<div class="t" style="left:788.50px;top:450.82px;font-size:13.20px;color:#a3a3a3;transform:scaleX(0.9522)">OrderEmployeeLastName</div>
<svg style="left:614.1px;top:474px" width="8" height="18" viewBox="0 0 8 18"><rect x="0" y="0" width="7.8" height="17.8" rx="1.6" fill="#2e2e2e"/><rect x="1.4" y="3" width="5" height="3.6" rx=".4" fill="#f2f2f2"/><rect x="1.4" y="8.1" width="5" height="3.5" rx=".4" fill="#f2f2f2"/><rect x="1.4" y="13" width="5" height="3.5" rx=".4" fill="#f2f2f2"/></svg>
<div class="t" style="left:636.40px;top:476.82px;font-size:13.20px;color:#1f1f1f;transform:scaleX(0.9636)">OrderShipViaCompanyName</div>
<div class="t" style="left:807.70px;top:476.82px;font-size:13.20px;color:#a3a3a3;transform:scaleX(0.9636)">OrderShipViaCompanyName</div>
<svg style="left:614.1px;top:500px" width="8" height="18" viewBox="0 0 8 18"><rect x="0" y="0" width="7.8" height="17.8" rx="1.6" fill="#2e2e2e"/><rect x="1.4" y="3" width="5" height="3.6" rx=".4" fill="#f2f2f2"/><rect x="1.4" y="8.1" width="5" height="3.5" rx=".4" fill="#f2f2f2"/><rect x="1.4" y="13" width="5" height="3.5" rx=".4" fill="#f2f2f2"/></svg>
<div class="t" style="left:636.40px;top:502.82px;font-size:13.20px;color:#1f1f1f;transform:scaleX(0.9627)">ProductID</div>
<svg style="left:614.1px;top:526px" width="8" height="18" viewBox="0 0 8 18"><rect x="0" y="0" width="7.8" height="17.8" rx="1.6" fill="#2e2e2e"/><rect x="1.4" y="3" width="5" height="3.6" rx=".4" fill="#f2f2f2"/><rect x="1.4" y="8.1" width="5" height="3.5" rx=".4" fill="#f2f2f2"/><rect x="1.4" y="13" width="5" height="3.5" rx=".4" fill="#f2f2f2"/></svg>
<div class="t" style="left:636.40px;top:528.82px;font-size:13.20px;color:#1f1f1f;transform:scaleX(0.9739)">ProductName</div>
<div class="t" style="left:721.80px;top:528.82px;font-size:13.20px;color:#a3a3a3;transform:scaleX(0.9739)">Product.ProductName</div>
<svg style="left:614.1px;top:552px" width="8" height="18" viewBox="0 0 8 18"><rect x="0" y="0" width="7.8" height="17.8" rx="1.6" fill="#2e2e2e"/><rect x="1.4" y="3" width="5" height="3.6" rx=".4" fill="#f2f2f2"/><rect x="1.4" y="8.1" width="5" height="3.5" rx=".4" fill="#f2f2f2"/><rect x="1.4" y="13" width="5" height="3.5" rx=".4" fill="#f2f2f2"/></svg>
<div class="t" style="left:636.40px;top:554.82px;font-size:13.20px;color:#1f1f1f;transform:scaleX(0.9697)">ProductCategoryName</div>
<div class="t" style="left:773.40px;top:554.82px;font-size:13.20px;color:#a3a3a3;transform:scaleX(0.9697)">ProductCategoryName</div>
<svg style="left:614.1px;top:578px" width="8" height="18" viewBox="0 0 8 18"><rect x="0" y="0" width="7.8" height="17.8" rx="1.6" fill="#2e2e2e"/><rect x="1.4" y="3" width="5" height="3.6" rx=".4" fill="#f2f2f2"/><rect x="1.4" y="8.1" width="5" height="3.5" rx=".4" fill="#f2f2f2"/><rect x="1.4" y="13" width="5" height="3.5" rx=".4" fill="#f2f2f2"/></svg>
<div class="t" style="left:636.40px;top:580.82px;font-size:13.20px;color:#1f1f1f;transform:scaleX(0.9718)">ProductSupplierCompanyName</div>
<div class="t" style="left:823.60px;top:580.82px;font-size:13.20px;color:#a3a3a3;transform:scaleX(0.9718)">ProductSupplierCompanyName</div>
<svg style="left:614.1px;top:604px" width="8" height="18" viewBox="0 0 8 18"><rect x="0" y="0" width="7.8" height="17.8" rx="1.6" fill="#2e2e2e"/><rect x="1.4" y="3" width="5" height="3.6" rx=".4" fill="#f2f2f2"/><rect x="1.4" y="8.1" width="5" height="3.5" rx=".4" fill="#f2f2f2"/><rect x="1.4" y="13" width="5" height="3.5" rx=".4" fill="#f2f2f2"/></svg>
<div class="t" style="left:636.40px;top:606.82px;font-size:13.20px;color:#1f1f1f;transform:scaleX(0.9468)">UnitPrice</div>
<svg style="left:614.1px;top:630px" width="8" height="18" viewBox="0 0 8 18"><rect x="0" y="0" width="7.8" height="17.8" rx="1.6" fill="#2e2e2e"/><rect x="1.4" y="3" width="5" height="3.6" rx=".4" fill="#f2f2f2"/><rect x="1.4" y="8.1" width="5" height="3.5" rx=".4" fill="#f2f2f2"/><rect x="1.4" y="13" width="5" height="3.5" rx=".4" fill="#f2f2f2"/></svg>
<div class="t" style="left:636.40px;top:632.82px;font-size:13.20px;color:#1f1f1f;transform:scaleX(0.9846)">Quantity</div>
<svg style="left:614.1px;top:656px" width="8" height="18" viewBox="0 0 8 18"><rect x="0" y="0" width="7.8" height="17.8" rx="1.6" fill="#2e2e2e"/><rect x="1.4" y="3" width="5" height="3.6" rx=".4" fill="#f2f2f2"/><rect x="1.4" y="8.1" width="5" height="3.5" rx=".4" fill="#f2f2f2"/><rect x="1.4" y="13" width="5" height="3.5" rx=".4" fill="#f2f2f2"/></svg>
<div class="t" style="left:636.40px;top:658.82px;font-size:13.20px;color:#1f1f1f;transform:scaleX(0.9639)">Discount</div>
<svg style="left:584.6px;top:684px" width="16" height="16" viewBox="0 0 16 16"><rect x=".6" y=".6" width="14.8" height="14.8" rx="1.4" fill="#fff" stroke="#1f68c9" stroke-width="1.2"/><path d="M.6 4h14.8" stroke="#1f68c9" stroke-width="2.2"/><path d="M.6 8.2h14.8M.6 11.7h14.8M5.5 4v11.4M10.5 4v11.4" stroke="#1f68c9" stroke-width="1.3"/></svg>
<div class="t" style="left:610.50px;top:684.82px;font-size:13.20px;color:#1f1f1f;transform:scaleX(0.9468)">Details</div>
<svg style="left:540px;top:712.5px" width="5" height="9" viewBox="0 0 5 9"><path d="M0 0l5 4.5L0 9z" fill="#111"/></svg>
<svg style="left:555px;top:708px" width="20" height="20" viewBox="0 0 20 20"><path d="M7.1 3V13.5H13v1.5c3.4 0 5.7-.8 5.7-1.8V3z" fill="#deeef6"/><path d="M7.1 3V6.2M18.7 3v10.2c0 1-2.2 1.8-5.6 1.8" fill="none" stroke="#2089b0" stroke-width="1.3"/><ellipse cx="12.9" cy="3" rx="5.8" ry="2" fill="#f2f9fc" stroke="#2089b0" stroke-width="1.3"/><circle cx="6.4" cy="9.5" r="1.45" fill="#fff" stroke="#111" stroke-width="1.1"/><path d="M6.4 11v2.5M2.8 15.7v-2.2h7.6v2.2" fill="none" stroke="#111" stroke-width="1.1"/><circle cx="2.8" cy="17.3" r="1.55" fill="#fff" stroke="#111" stroke-width="1.1"/><circle cx="10.4" cy="17.3" r="1.55" fill="#fff" stroke="#111" stroke-width="1.1"/></svg>
<div class="t" style="left:584.30px;top:710.82px;font-size:13.20px;color:#1f1f1f;transform:scaleX(0.9643)">Orders</div>
<svg style="left:540px;top:738.5px" width="5" height="9" viewBox="0 0 5 9"><path d="M0 0l5 4.5L0 9z" fill="#111"/></svg>
<svg style="left:555px;top:734px" width="20" height="20" viewBox="0 0 20 20"><path d="M7.1 3V13.5H13v1.5c3.4 0 5.7-.8 5.7-1.8V3z" fill="#deeef6"/><path d="M7.1 3V6.2M18.7 3v10.2c0 1-2.2 1.8-5.6 1.8" fill="none" stroke="#2089b0" stroke-width="1.3"/><ellipse cx="12.9" cy="3" rx="5.8" ry="2" fill="#f2f9fc" stroke="#2089b0" stroke-width="1.3"/><circle cx="6.4" cy="9.5" r="1.45" fill="#fff" stroke="#111" stroke-width="1.1"/><path d="M6.4 11v2.5M2.8 15.7v-2.2h7.6v2.2" fill="none" stroke="#111" stroke-width="1.1"/><circle cx="2.8" cy="17.3" r="1.55" fill="#fff" stroke="#111" stroke-width="1.1"/><circle cx="10.4" cy="17.3" r="1.55" fill="#fff" stroke="#111" stroke-width="1.1"/></svg>
<div class="t" style="left:584.30px;top:736.82px;font-size:13.20px;color:#1f1f1f;transform:scaleX(0.9599)">Products</div>
<svg style="left:540px;top:764.5px" width="5" height="9" viewBox="0 0 5 9"><path d="M0 0l5 4.5L0 9z" fill="#111"/></svg>
<svg style="left:555px;top:760px" width="20" height="20" viewBox="0 0 20 20"><path d="M7.1 3V13.5H13v1.5c3.4 0 5.7-.8 5.7-1.8V3z" fill="#deeef6"/><path d="M7.1 3V6.2M18.7 3v10.2c0 1-2.2 1.8-5.6 1.8" fill="none" stroke="#2089b0" stroke-width="1.3"/><ellipse cx="12.9" cy="3" rx="5.8" ry="2" fill="#f2f9fc" stroke="#2089b0" stroke-width="1.3"/><circle cx="6.4" cy="9.5" r="1.45" fill="#fff" stroke="#111" stroke-width="1.1"/><path d="M6.4 11v2.5M2.8 15.7v-2.2h7.6v2.2" fill="none" stroke="#111" stroke-width="1.1"/><circle cx="2.8" cy="17.3" r="1.55" fill="#fff" stroke="#111" stroke-width="1.1"/><circle cx="10.4" cy="17.3" r="1.55" fill="#fff" stroke="#111" stroke-width="1.1"/></svg>
<div class="t" style="left:584.30px;top:762.82px;font-size:13.20px;color:#1f1f1f;transform:scaleX(0.9443)">Region</div>
<svg style="left:540px;top:790.5px" width="5" height="9" viewBox="0 0 5 9"><path d="M0 0l5 4.5L0 9z" fill="#111"/></svg>
<svg style="left:555px;top:786px" width="20" height="20" viewBox="0 0 20 20"><path d="M7.1 3V13.5H13v1.5c3.4 0 5.7-.8 5.7-1.8V3z" fill="#deeef6"/><path d="M7.1 3V6.2M18.7 3v10.2c0 1-2.2 1.8-5.6 1.8" fill="none" stroke="#2089b0" stroke-width="1.3"/><ellipse cx="12.9" cy="3" rx="5.8" ry="2" fill="#f2f9fc" stroke="#2089b0" stroke-width="1.3"/><circle cx="6.4" cy="9.5" r="1.45" fill="#fff" stroke="#111" stroke-width="1.1"/><path d="M6.4 11v2.5M2.8 15.7v-2.2h7.6v2.2" fill="none" stroke="#111" stroke-width="1.1"/><circle cx="2.8" cy="17.3" r="1.55" fill="#fff" stroke="#111" stroke-width="1.1"/><circle cx="10.4" cy="17.3" r="1.55" fill="#fff" stroke="#111" stroke-width="1.1"/></svg>
<div class="t" style="left:584.30px;top:788.82px;font-size:13.20px;color:#1f1f1f;transform:scaleX(0.9463)">Shippers</div>
<svg style="left:540px;top:816.5px" width="5" height="9" viewBox="0 0 5 9"><path d="M0 0l5 4.5L0 9z" fill="#111"/></svg>
<svg style="left:555px;top:812px" width="20" height="20" viewBox="0 0 20 20"><path d="M7.1 3V13.5H13v1.5c3.4 0 5.7-.8 5.7-1.8V3z" fill="#deeef6"/><path d="M7.1 3V6.2M18.7 3v10.2c0 1-2.2 1.8-5.6 1.8" fill="none" stroke="#2089b0" stroke-width="1.3"/><ellipse cx="12.9" cy="3" rx="5.8" ry="2" fill="#f2f9fc" stroke="#2089b0" stroke-width="1.3"/><circle cx="6.4" cy="9.5" r="1.45" fill="#fff" stroke="#111" stroke-width="1.1"/><path d="M6.4 11v2.5M2.8 15.7v-2.2h7.6v2.2" fill="none" stroke="#111" stroke-width="1.1"/><circle cx="2.8" cy="17.3" r="1.55" fill="#fff" stroke="#111" stroke-width="1.1"/><circle cx="10.4" cy="17.3" r="1.55" fill="#fff" stroke="#111" stroke-width="1.1"/></svg>
<div class="t" style="left:584.30px;top:814.82px;font-size:13.20px;color:#1f1f1f;transform:scaleX(0.9576)">Suppliers</div>
<svg style="left:540px;top:842.5px" width="5" height="9" viewBox="0 0 5 9"><path d="M0 0l5 4.5L0 9z" fill="#111"/></svg>
<svg style="left:555px;top:838px" width="20" height="20" viewBox="0 0 20 20"><path d="M7.1 3V13.5H13v1.5c3.4 0 5.7-.8 5.7-1.8V3z" fill="#deeef6"/><path d="M7.1 3V6.2M18.7 3v10.2c0 1-2.2 1.8-5.6 1.8" fill="none" stroke="#2089b0" stroke-width="1.3"/><ellipse cx="12.9" cy="3" rx="5.8" ry="2" fill="#f2f9fc" stroke="#2089b0" stroke-width="1.3"/><circle cx="6.4" cy="9.5" r="1.45" fill="#fff" stroke="#111" stroke-width="1.1"/><path d="M6.4 11v2.5M2.8 15.7v-2.2h7.6v2.2" fill="none" stroke="#111" stroke-width="1.1"/><circle cx="2.8" cy="17.3" r="1.55" fill="#fff" stroke="#111" stroke-width="1.1"/><circle cx="10.4" cy="17.3" r="1.55" fill="#fff" stroke="#111" stroke-width="1.1"/></svg>
<div class="t" style="left:584.30px;top:840.82px;font-size:13.20px;color:#1f1f1f;transform:scaleX(0.9734)">Territories</div>
</div>
<svg style="left:527px;top:970px" width="6" height="8" viewBox="0 0 6 8"><path d="M5 0v8L0 4z" fill="#a6a6a6"/></svg>
<div class="r" style="left:537px;top:972px;width:190px;height:6px;background:#a9a9a9;border-radius:3px"></div>
<svg style="left:837px;top:970px" width="6" height="8" viewBox="0 0 6 8"><path d="M0 0v8l5-4z" fill="#a6a6a6"/></svg>
<div class="r" style="left:845px;top:117px;width:321px;height:36px;background:#f0f0f0"></div>
<svg style="left:850px;top:124px" width="54" height="28" viewBox="0 0 54 28"><path d="M13 5L16.4 10.3H9.6z" fill="none" stroke="#555" stroke-width="1.5" stroke-linejoin="round"/><rect x="6.3" y="14.1" width="4.8" height="4.9" fill="none" stroke="#555" stroke-width="1.5"/><circle cx="17.5" cy="16.7" r="2.6" fill="none" stroke="#555" stroke-width="1.5"/><rect x="3" y="24" width="20" height="1.9" fill="#1a1a1a"/><path d="M33.6 16.1L36.7 8.4L39.8 16.1M34.7 13.6h4.1" fill="none" stroke="#555" stroke-width="1.5"/><path d="M42.5 8.8h5.7L42.5 15.4h6.1" fill="none" stroke="#555" stroke-width="1.5" stroke-linejoin="round"/><path d="M39.1 5.9l1.85-1.7 1.85 1.7zM39.1 18l1.85 1.9 1.85-1.9z" fill="#555"/></svg>
<div class="r" style="left:851px;top:153.5px;width:307px;height:27.5px;background:#fff;border:1px solid #dcdcdc"></div>
<svg style="left:858.5px;top:159px" width="16" height="16" viewBox="0 0 16 16"><rect x=".6" y=".6" width="14.8" height="14.8" rx="1.4" fill="#fff" stroke="#1f68c9" stroke-width="1.2"/><path d="M.6 4h14.8" stroke="#1f68c9" stroke-width="2.2"/><path d="M.6 8.2h14.8M.6 11.7h14.8M5.5 4v11.4M10.5 4v11.4" stroke="#1f68c9" stroke-width="1.3"/></svg>
<div class="t" style="left:884.40px;top:160.42px;font-size:13.20px;color:#1f1f1f;transform:scaleX(0.9443)">Details</div>
<div class="r" style="left:845px;top:184px;width:321px;height:27px;background:#ebebf0"></div>
<svg style="left:852px;top:196px" width="10" height="5.5" viewBox="0 0 10 5.5"><path d="M0 0h10L5 5.5z" fill="#111"/></svg>
<div class="t" style="left:872.70px;top:191.15px;font-size:13.40px;color:#1f1f1f;transform:scaleX(1.0421);-webkit-text-stroke:0.25px #1f1f1f">Misc</div>
<svg style="left:878px;top:222px" width="20" height="18" viewBox="0 0 20 18"><rect x=".8" y=".8" width="14" height="14" rx="1.2" fill="#fff" stroke="#333" stroke-width="1.5"/><path d="M.8 4h14" stroke="#333" stroke-width="2.4"/><path d="M.8 7.7h14M.8 11.3h14M5.5 4v10.8M10 4v10.8" stroke="#333" stroke-width="1.2"/><rect x="8" y="8.5" width="11" height="9" fill="#fff" stroke="#1f68c9" stroke-width="1.5"/><path d="M8 13h11M13.5 8.5v9" stroke="#1f68c9" stroke-width="1.3"/></svg>
<div class="t" style="left:904.50px;top:224.22px;font-size:13.20px;color:#1f1f1f;transform:scaleX(0.9483)">Products</div>
<div class="t" style="left:960.60px;top:224.22px;font-size:13.20px;color:#a3a3a3;transform:scaleX(0.9579)">Products</div>
<div class="r" style="left:845px;top:252px;width:321px;height:1px;background:#e3e3e3"></div>
<div class="r" style="left:845px;top:803px;width:321px;height:1px;background:#cfcfcf"></div>
</div>
<div style="position:absolute;left:0;top:0;width:1166px;height:981px;border:1px solid #adadad;border-radius:8px;box-shadow:0 0 0 12px #e4e4e4;pointer-events:none"></div>
</body></html>
